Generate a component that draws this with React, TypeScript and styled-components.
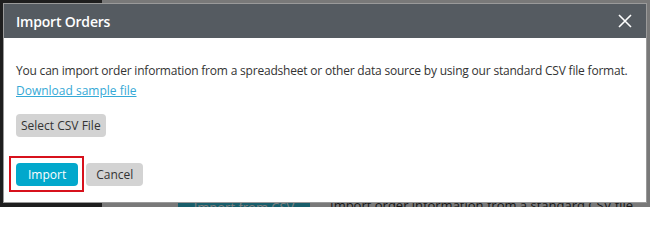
import React from 'react';
import styled, { createGlobalStyle } from 'styled-components';

const GlobalStyle = createGlobalStyle`
  html, body {
    margin: 0;
    padding: 0;
    width: 650px;
    height: 207px;
    overflow: hidden;
    font-family: "Open Sans", "Liberation Sans", sans-serif;
  }
`;

const Screen = styled.div`
  position: relative;
  width: 650px;
  height: 207px;
  overflow: hidden;
`;

const Page = styled.div`
  display: flex;
  height: 207px;
  overflow: hidden;
`;

const Sidebar = styled.div`
  width: 102px;
  background: #3c3c3c;
`;

const Main = styled.div`
  flex: 1;
  min-height: 0;
  overflow: hidden;
  background: #f2f2f2;
  padding: 203px 0 0 76px;
  display: flex;
  align-items: flex-start;
  gap: 20px;
`;

const PageButton = styled.div`
  width: 132px;
  height: 4px;
  overflow: hidden;
  background: #33bcd6;
  color: #fff;
  font-size: 13px;
  text-align: center;
  line-height: 8px;
`;

const PageText = styled.div`
  font-size: 13px;
  color: #333;
  line-height: 4px;
  white-space: nowrap;
`;

const Overlay = styled.div`
  position: absolute;
  inset: 0;
  background: rgba(0, 0, 0, 0.5);
`;

const Modal = styled.div`
  position: absolute;
  top: 3px;
  left: 3px;
  width: 642px;
  height: 198px;
  border: 1px solid #9a9a9a;
  background: #fff;
  display: flex;
  flex-direction: column;
`;

const Header = styled.div`
  height: 34px;
  background: #555b61;
  display: flex;
  align-items: center;
  justify-content: space-between;
  padding: 0 13px 0 12px;
`;

const Title = styled.h2`
  margin: 0;
  font-size: 14px;
  font-weight: 600;
  color: #fff;
  letter-spacing: -0.2px;
`;

const CloseButton = styled.button`
  border: none;
  background: none;
  padding: 0;
  width: 16px;
  height: 16px;
  display: flex;
  align-items: center;
  justify-content: center;
  cursor: pointer;
`;

const Body = styled.div`
  padding: 23px 12px 0 12px;
`;

const Text = styled.p`
  margin: 0;
  font-size: 12px;
  line-height: 20px;
  color: #333;
  white-space: nowrap;
  letter-spacing: -0.2px;
`;

const SampleLink = styled.a`
  display: block;
  width: max-content;
  font-size: 12px;
  line-height: 20px;
  color: #35a9d6;
  text-decoration: underline;
`;

const Button = styled.button<{ $primary?: boolean }>`
  height: 23px;
  padding: 0 ${p => (p.$primary ? '12px' : '10px')};
  border: none;
  border-radius: 4px;
  font-family: inherit;
  font-size: 12px;
  background: ${p => (p.$primary ? '#02a8cc' : '#d3d3d3')};
  color: ${p => (p.$primary ? '#fff' : '#333')};
  cursor: pointer;
`;

const FileButton = styled(Button)`
  margin-top: 13px;
  padding: 0 5px;
`;

const Footer = styled.div`
  display: flex;
  gap: 8px;
  padding: 26px 12px 0 12px;
`;

const Highlight = styled.div`
  position: relative;
  display: flex;
`;

const HighlightBox = styled.span`
  position: absolute;
  inset: -7px -6px -6px -7px;
  border: 2px solid #d7111c;
  pointer-events: none;
`;

const App: React.FC = () => {
  return (
    <Screen>
      <GlobalStyle />
      <Page>
        <Sidebar />
        <Main>
          <PageButton>Import from CSV</PageButton>
          <PageText>Import order information from a standard CSV file.</PageText>
        </Main>
      </Page>
      <Overlay />
      <Modal>
        <Header>
          <Title>Import Orders</Title>
          <CloseButton aria-label="Close">
            <svg width="14" height="14" viewBox="0 0 14 14">
              <path d="M1 1 L13 13 M13 1 L1 13" stroke="#fff" strokeWidth="1.6" fill="none" />
            </svg>
          </CloseButton>
        </Header>
        <Body>
          <Text>
            You can import order information from a spreadsheet or other data source by using our standard CSV file format.
          </Text>
          <SampleLink href="#">Download sample file</SampleLink>
          <div>
            <FileButton>Select CSV File</FileButton>
          </div>
        </Body>
        <Footer>
          <Highlight>
            <Button $primary>Import</Button>
            <HighlightBox />
          </Highlight>
          <Button>Cancel</Button>
        </Footer>
      </Modal>
    </Screen>
  );
};

export default App;
